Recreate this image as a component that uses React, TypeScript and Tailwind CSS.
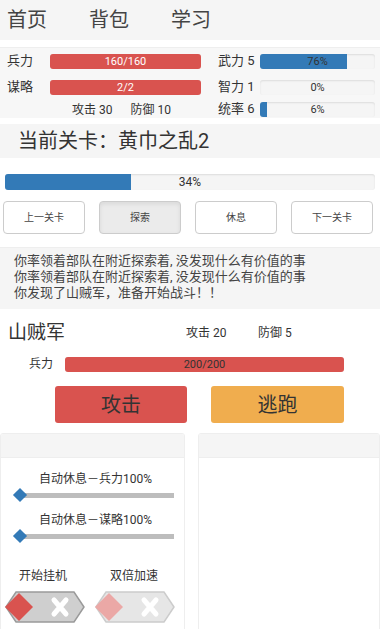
import React from 'react'

const font = { fontFamily: 'Roboto, "Noto Sans CJK SC", sans-serif' }

function Bar({ pct, color, text, textColor, w }: { pct: number; color: string; text: string; textColor: string; w: string }) {
  return (
    <div className={`relative h-[15px] ${w} rounded-[3px] bg-[#f5f5f5] shadow-[inset_0_1px_2px_rgba(0,0,0,0.1)] overflow-hidden`}>
      <div className={`h-full ${color}`} style={{ width: `${pct}%` }} />
      <div className={`absolute inset-0 flex items-center justify-center text-[11px] leading-none ${textColor}`}>{text}</div>
    </div>
  )
}

function Toggle({ faded }: { faded?: boolean }) {
  return (
    <svg width="80" height="34" viewBox="0 0 80 34" className={faded ? 'opacity-50' : ''}>
      <polygon points="1,17 11,2 69,2 79,17 69,32 11,32" fill="#cfcfcf" stroke="#9a9a9a" strokeWidth="1.5" />
      <polygon points="14,3 28,17 14,31 0,17" fill="#d9534f" />
      <path d="M49 10 L61 24 M61 10 L49 24" stroke="#fff" strokeWidth="5" strokeLinecap="round" />
    </svg>
  )
}

function Slider({ label }: { label: string }) {
  return (
    <div className="flex flex-col">
      <div className="text-[12px] leading-[16px] text-[#333] text-center pl-[6px]">{label}</div>
      <div className="relative h-[14px] mt-[1px] ml-[17px] mr-[10px] flex items-center">
        <div className="h-[5px] w-full bg-[#bdbdbd]" />
        <div className="absolute left-[-3px] top-[2px] w-[10px] h-[10px] bg-[#337ab7] rotate-45" />
      </div>
    </div>
  )
}

export default function App() {
  return (
    <div className="w-[380px] h-[629px] bg-white overflow-hidden text-[#333]" style={font}>
      {/* nav */}
      <div className="h-[40px] bg-[#f5f5f5] flex items-center gap-[42px] pl-[7px] text-[20px] text-[#444]">
        <span>首页</span>
        <span>背包</span>
        <span>学习</span>
      </div>

      {/* stats */}
      <div className="mt-[7px] h-[71px] bg-[#f7f7f7] border-t border-[#eee] flex text-[13px]">
        <div className="w-[218px] pl-[7px] pt-[5px]">
          <div className="flex items-center h-[16px]">
            <span className="w-[43px]">兵力</span>
            <Bar pct={100} color="bg-[#d9534f]" text="160/160" textColor="text-white" w="w-[151px]" />
          </div>
          <div className="flex items-center h-[16px] mt-[10px]">
            <span className="w-[43px]">谋略</span>
            <Bar pct={100} color="bg-[#d9534f]" text="2/2" textColor="text-white" w="w-[151px]" />
          </div>
          <div className="flex h-[16px] mt-[6px] text-[12px] pl-[65px] gap-[18px]">
            <span>攻击 30</span>
            <span>防御 10</span>
          </div>
        </div>
        <div className="flex-1 pt-[5px]">
          <div className="flex items-center h-[16px]">
            <span className="w-[42px]">武力 5</span>
            <Bar pct={76} color="bg-[#337ab7]" text="76%" textColor="text-[#333]" w="w-[115px]" />
          </div>
          <div className="flex items-center h-[16px] mt-[10px]">
            <span className="w-[42px]">智力 1</span>
            <Bar pct={0} color="bg-[#337ab7]" text="0%" textColor="text-[#333]" w="w-[115px]" />
          </div>
          <div className="flex items-center h-[16px] mt-[6px]">
            <span className="w-[42px]">统率 6</span>
            <Bar pct={6} color="bg-[#337ab7]" text="6%" textColor="text-[#333]" w="w-[115px]" />
          </div>
        </div>
      </div>

      {/* level */}
      <div className="mt-[6px] h-[34px] bg-[#f5f5f5] flex items-center pl-[18px] text-[20px]">当前关卡：黄巾之乱2</div>

      <div className="mt-[16px] mx-[5px]">
        <div className="relative h-[16px] rounded-[3px] bg-[#f5f5f5] shadow-[inset_0_1px_2px_rgba(0,0,0,0.1)] overflow-hidden">
          <div className="h-full bg-[#337ab7]" style={{ width: '34%' }} />
          <div className="absolute inset-0 flex items-center justify-center text-[12px]">34%</div>
        </div>
      </div>

      <div className="mt-[11px] px-[3px] flex gap-[14px]">
        {['上一关卡', '探索', '休息', '下一关卡'].map((t, i) => (
          <div
            key={t}
            className={`w-[82px] h-[33px] rounded-[4px] border border-[#ccc] flex items-center justify-center text-[10px] text-[#444] ${i === 1 ? 'bg-[#ebebeb] shadow-[inset_0_2px_4px_rgba(0,0,0,0.08)]' : 'bg-white'}`}
          >
            {t}
          </div>
        ))}
      </div>

      {/* log */}
      <div className="mt-[13px] h-[62px] bg-[#f5f5f5] border-t border-[#eee] pl-[14px] pt-[5px] text-[13px] leading-[16px] text-[#444]">
        <div>你率领着部队在附近探索着, 没发现什么有价值的事</div>
        <div>你率领着部队在附近探索着, 没发现什么有价值的事</div>
        <div>你发现了山贼军，准备开始战斗！！</div>
      </div>

      {/* enemy */}
      <div className="mt-[12px] flex items-center h-[24px]">
        <span className="pl-[8px] text-[19px] w-[186px]">山贼军</span>
        <span className="text-[12px] w-[72px]">攻击 20</span>
        <span className="text-[12px]">防御 5</span>
      </div>
      <div className="mt-[10px] flex items-center">
        <span className="pl-[29px] w-[65px] text-[12px]">兵力</span>
        <Bar pct={100} color="bg-[#d9534f]" text="200/200" textColor="text-[#333]" w="w-[279px]" />
      </div>
      <div className="mt-[13px] flex gap-[24px] pl-[55px]">
        <div className="w-[132px] h-[37px] rounded-[3px] bg-[#d9534f] flex items-center justify-center text-[20px] text-[#333]">攻击</div>
        <div className="w-[133px] h-[37px] rounded-[3px] bg-[#f0ad4e] flex items-center justify-center text-[20px] text-[#333]">逃跑</div>
      </div>

      {/* bottom panels */}
      <div className="mt-[10px] flex gap-[13px]">
        <div className="w-[185px] h-[200px] border border-[#eee] rounded-[3px] overflow-hidden">
          <div className="h-[24px] bg-[#f5f5f5] border-b border-[#eee]" />
          <div className="pt-[13px] flex flex-col gap-[10px]">
            <Slider label="自动休息－兵力100%" />
            <Slider label="自动休息－谋略100%" />
          </div>
          <div className="mt-[24px] flex pl-[4px] gap-[10px]">
            <div className="flex flex-col items-center w-[80px]">
              <span className="text-[12px] mr-[4px]">开始挂机</span>
              <div className="mt-[5px]"><Toggle /></div>
            </div>
            <div className="flex flex-col items-center w-[80px]">
              <span className="text-[12px] mr-[2px]">双倍加速</span>
              <div className="mt-[5px]"><Toggle faded /></div>
            </div>
          </div>
        </div>
        <div className="flex-1 h-[200px] border border-[#eee] rounded-[3px] overflow-hidden">
          <div className="h-[24px] bg-[#f5f5f5] border-b border-[#eee]" />
        </div>
      </div>
    </div>
  )
}
